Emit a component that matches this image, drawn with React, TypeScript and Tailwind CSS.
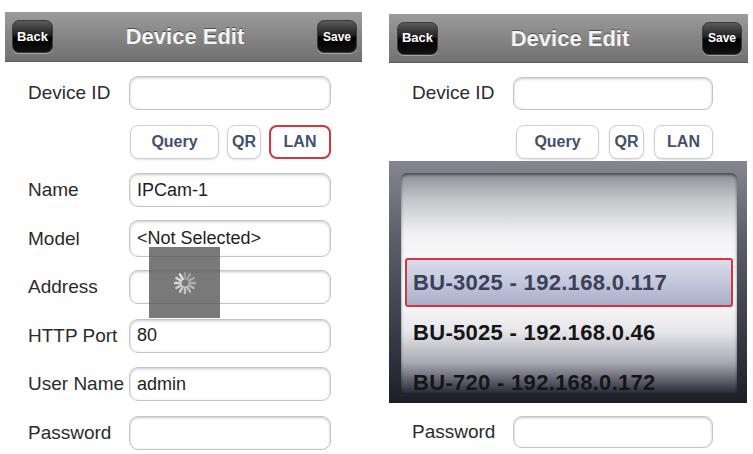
import type { ReactNode } from 'react'

const font = { fontFamily: '"Liberation Sans", Arial, Helvetica, sans-serif' }

function NavButton({ children, w }: { children: ReactNode; w: string }) {
  return (
    <div
      className={`${w} h-[33px] rounded-[7px] flex items-center justify-center text-white font-bold text-[13px] border border-[#3a3a3a] bg-[linear-gradient(to_bottom,#5a5a5a_0%,#1c1c1c_48%,#000_52%,#111_100%)] shadow-[0_1px_0_rgba(255,255,255,0.35)]`}
    >
      {children}
    </div>
  )
}

function NavBar({ h, pl, pr }: { h: string; pl: string; pr: string }) {
  return (
    <div
      className={`${h} grid grid-cols-[auto_1fr_auto] items-center bg-[linear-gradient(to_bottom,#9c9c9c_0%,#858585_50%,#717171_100%)] border-b border-[#5c5c5c]`}
    >
      <div className={pl}>
        <NavButton w="w-[41px]">Back</NavButton>
      </div>
      <div className="text-center text-[22px] font-bold text-[#f4f4f4] [text-shadow:0_-1px_0_rgba(0,0,0,0.45)]">
        Device Edit
      </div>
      <div className={pr}>
        <NavButton w="w-[40px]">
          <span className="text-[12px]">Save</span>
        </NavButton>
      </div>
    </div>
  )
}

function Field({ value, h = 'h-[34px]', w = 'w-[202px]' }: { value?: string; h?: string; w?: string }) {
  return (
    <div
      className={`${w} ${h} rounded-[9px] bg-white border border-[#c4c4c4] shadow-[inset_0_1px_3px_rgba(0,0,0,0.22)] flex items-center px-[7px] text-[18px] text-[#1e1e1e]`}
    >
      {value}
    </div>
  )
}

function Row({ label, value, h, w }: { label: string; value?: string; h?: string; w?: string }) {
  return (
    <div className="h-[48.5px] flex items-center">
      <div className="w-[124px] pl-[23px] text-[19px] text-[#2b2b2b] whitespace-nowrap">{label}</div>
      <Field value={value} h={h} w={w} />
    </div>
  )
}

function ToolButton({ children, w, active }: { children: ReactNode; w: string; active?: boolean }) {
  return (
    <div
      className={`${w} h-[34px] rounded-[8px] bg-white flex items-center justify-center text-[16px] font-bold text-[#44506c] ${
        active ? 'border-2 border-[#d23440]' : 'border border-[#cfcfcf] shadow-[0_1px_2px_rgba(0,0,0,0.12)]'
      }`}
    >
      {children}
    </div>
  )
}

function Spinner() {
  const spokes = Array.from({ length: 12 })
  return (
    <svg width="24" height="24" viewBox="-12 -12 24 24">
      {spokes.map((_, i) => (
        <line
          key={i}
          x1="0"
          y1="-4.5"
          x2="0"
          y2="-10"
          stroke="#ececec"
          strokeWidth="2.4"
          strokeLinecap="round"
          opacity={0.3 + (i / 12) * 0.7}
          transform={`rotate(${i * 30})`}
        />
      ))}
    </svg>
  )
}

function Picker() {
  const rows = ['BU-5025 - 192.168.0.46', 'BU-720 - 192.168.0.172']
  return (
    <div className="h-[242px] w-[358px] pl-[12px] pr-[10px] pt-[12px] pb-[10px] bg-[linear-gradient(to_bottom,#85878f_0%,#5e606c_30%,#3a3c48_70%,#1d1e27_100%)]">
      <div className="h-[220px] rounded-t-[6px] overflow-hidden flex flex-col shadow-[inset_0_2px_3px_rgba(0,0,0,0.5)] bg-[linear-gradient(to_bottom,#8f9098_0%,#c4c5ca_12%,#f2f2f4_28%,#ffffff_55%,#e6e6ea_72%,#a9aab4_86%,#2b2c3a_100%)]">
        <div className="h-[85px] shrink-0" />
        <div className="mx-[4px] h-[49px] shrink-0 rounded-[3px] border-2 border-[#d63440] bg-[linear-gradient(to_bottom,#d9dcea_0%,#c3c7dc_50%,#a9aec8_100%)] flex items-center pl-[6px] text-[22px] tracking-[0.3px] font-bold text-[#3b4058]">
          BU-3025 - 192.168.0.117
        </div>
        {rows.map((r) => (
          <div key={r} className="h-[50px] shrink-0 flex items-center pl-[12px] text-[22px] tracking-[0.3px] font-bold text-[#151515]">
            {r}
          </div>
        ))}
      </div>
    </div>
  )
}

export default function App() {
  return (
    <div className="w-[753px] h-[454px] bg-white flex overflow-hidden" style={font}>
      {/* left: edit form with loading indicator */}
      <div className="relative ml-[5px] mt-[12px] w-[357px]">
        <NavBar h="h-[50px]" pl="pl-[7px]" pr="pr-[5px]" />
        <div className="pt-[7px]">
          <Row label="Device ID" />
          <div className="h-[48.5px] flex items-center justify-end gap-[8px] pr-[31px]">
            <ToolButton w="w-[89px]">Query</ToolButton>
            <ToolButton w="w-[34px]">QR</ToolButton>
            <ToolButton w="w-[62px]" active>
              LAN
            </ToolButton>
          </div>
          <Row label="Name" value="IPCam-1" />
          <Row label="Model" value="<Not Selected>" h="h-[37px]" />
          <Row label="Address" />
          <Row label="HTTP Port" value="80" />
          <Row label="User Name" value="admin" />
          <Row label="Password" />
        </div>
        <div className="absolute left-[144px] top-[235px] w-[71px] h-[71px] bg-[rgba(88,88,88,0.8)] flex items-center justify-center">
          <Spinner />
        </div>
      </div>

      {/* right: LAN search results wheel */}
      <div className="ml-[27px] mt-[14px] w-[359px]">
        <NavBar h="h-[49px]" pl="pl-[8px]" pr="pr-[6px]" />
        <div className="pt-[6px]">
          <Row label="Device ID" w="w-[200px]" h="h-[33px]" />
          <div className="h-[43.5px] pt-[7.5px] flex items-start justify-end gap-[10px] pr-[35px]">
            <ToolButton w="w-[83px]">Query</ToolButton>
            <ToolButton w="w-[35px]">QR</ToolButton>
            <ToolButton w="w-[59px]">LAN</ToolButton>
          </div>
          <Picker />
          <div className="mt-[5px]">
            <Row label="Password" w="w-[200px]" h="h-[32px]" />
          </div>
        </div>
      </div>
    </div>
  )
}
